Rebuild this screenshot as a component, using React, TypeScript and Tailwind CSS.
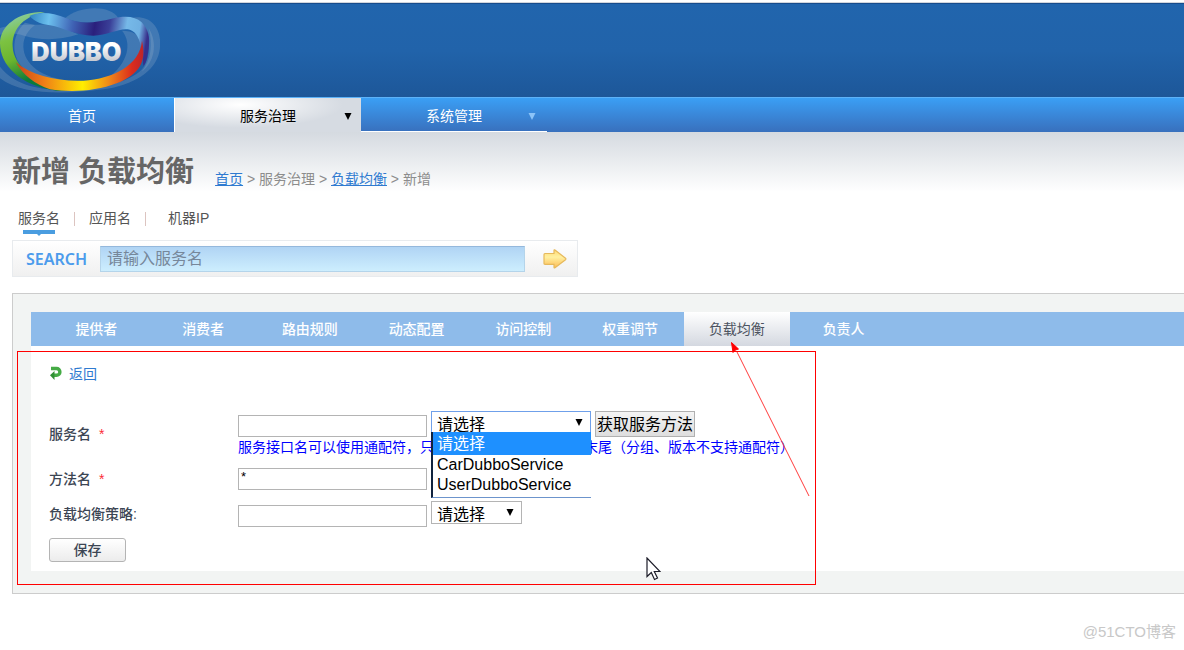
import React from "react";

const tabs = [
  "提供者",
  "消费者",
  "路由规则",
  "动态配置",
  "访问控制",
  "权重调节",
  "负载均衡",
  "负责人",
];

const services = ["请选择", "CarDubboService", "UserDubboService"];

function Logo() {
  return (
    <svg width="160" height="93" viewBox="0 12 480 279" role="img" aria-label="DUBBO">
      <defs>
        <linearGradient id="green" x1="0" y1="0" x2="0.35" y2="1">
          <stop offset="0" stopColor="#8fd0c8" />
          <stop offset="0.35" stopColor="#7cc242" />
          <stop offset="0.6" stopColor="#6cb52d" />
          <stop offset="0.9" stopColor="#0c7a3c" />
        </linearGradient>
        <linearGradient id="top" x1="90" y1="0" x2="450" y2="60" gradientUnits="userSpaceOnUse">
          <stop offset="0" stopColor="#2a7fbd" />
          <stop offset="0.18" stopColor="#6cc0ee" />
          <stop offset="0.38" stopColor="#3f63b5" />
          <stop offset="0.56" stopColor="#2a1f7c" />
          <stop offset="0.68" stopColor="#3a3f98" />
          <stop offset="0.82" stopColor="#76b9e8" />
          <stop offset="0.93" stopColor="#6fb0e2" />
          <stop offset="1" stopColor="#37308c" />
        </linearGradient>
        <linearGradient id="bottom" x1="45" y1="0" x2="435" y2="0" gradientUnits="userSpaceOnUse">
          <stop offset="0" stopColor="#c8401c" />
          <stop offset="0.22" stopColor="#ef7d17" />
          <stop offset="0.52" stopColor="#ffee00" />
          <stop offset="0.72" stopColor="#f08a18" />
          <stop offset="0.9" stopColor="#dc2c1c" />
          <stop offset="1" stopColor="#b8242c" />
        </linearGradient>
        <linearGradient id="letters" x1="0" y1="0" x2="0" y2="1">
          <stop offset="0.3" stopColor="#ffffff" />
          <stop offset="0.8" stopColor="#c4c8d0" />
        </linearGradient>
      </defs>
      <g fill="#a8bccf" fillOpacity="0.24">
        <path d="M195 55 C235 18 330 12 355 55 C310 70 250 76 195 55 Z" />
        <path d="M0 84 C50 68 110 78 150 72 C190 80 215 95 235 103 C170 125 110 118 75 108 C45 98 20 98 0 104 Z" />
        <path d="M390 54 C460 40 490 95 478 155 C466 215 400 255 310 268 C200 282 70 288 0 235 L0 200 C40 250 100 265 160 268 C290 275 400 245 432 200 C460 150 450 80 390 54 Z" />
        <path d="M446 85 C475 130 462 190 425 215 C455 180 458 130 446 85 Z" />
        <path d="M75 68 C30 110 35 175 75 208 C130 240 180 246 220 243 C120 235 72 190 70 140 C70 110 85 90 105 75 Z" />
        <path d="M366 92 C390 120 395 175 330 230 C400 205 425 165 425 130 C420 105 400 92 366 92 Z" />
      </g>
      <path
        d="M135 36 C60 32 0 75 0 130 C0 195 60 258 170 272 C195 273 205 270 205 268 C110 250 40 200 38 140 C36 95 60 52 135 36 Z"
        fill="url(#green)"
      />
      <path
        d="M88 48 C115 34 155 36 200 55 C250 76 290 66 335 56 C380 46 405 50 425 67 C445 88 451 112 446 146 C443 172 438 190 430 198 C428 150 420 105 396 92 C366 78 330 106 280 107 C225 107 190 82 150 76 C125 72 105 66 88 48 Z"
        fill="url(#top)"
      />
      <path
        d="M47 187 C95 226 170 245 250 242 C340 236 420 195 426 122 C440 185 420 222 350 250 C290 274 210 278 150 268 C105 254 70 225 47 187 Z"
        fill="url(#bottom)"
      />
      <text
        x="94"
        y="184"
        fontFamily="Inter, sans-serif"
        fontWeight="900"
        fontSize="76"
        fill="url(#letters)"
      >
        DUBBO
      </text>
    </svg>
  );
}

function Caret({ className }: { className: string }) {
  return (
    <svg className={className} width="8" height="7" viewBox="0 0 8 7" aria-hidden="true">
      <path d="M0.500 0h7L4 7z" fill="currentColor" />
    </svg>
  );
}

function Header() {
  return (
    <header>
      <div className="h-1 border-b border-[#174c8c] bg-white">
        <div className="h-[3px] border-b border-gray-300" />
      </div>
      <div className="h-[93px] bg-linear-to-b from-[#2165ad] via-[#2163aa] to-[#1d5799]">
        <Logo />
      </div>
      <nav className="flex h-[35px] border-t border-[#5db2f8] bg-linear-to-b from-[#3a9ff5] to-[#3870bd] text-sm text-white">
        <a
          href="#home"
          className="flex w-[174px] items-center justify-center pt-[2px] pr-[10px]"
        >
          首页
        </a>
        <a
          href="#governance"
          className="relative flex w-[187px] items-center justify-center border-l border-white bg-radial-[at_35%_20%] from-white to-[#d6dbe2] to-60% pt-[2px] text-black"
        >
          服务治理
          <Caret className="absolute right-[9px] text-black" />
        </a>
        <a
          href="#system"
          className="relative flex w-[186px] items-center justify-center border-b border-white pt-[3px]"
        >
          系统管理
          <Caret className="absolute right-[11px] text-[#8cc4f8]" />
        </a>
      </nav>
    </header>
  );
}

function Search() {
  return (
    <section className="mt-4">
      <div className="flex h-[34px] items-start gap-[14px] pl-[6px] text-sm leading-6 text-[#555]">
        <a href="#service" className="relative">
          服务名
          <svg className="absolute top-6 left-[5px]" width="32" height="6" viewBox="0 0 32 6" aria-hidden="true">
            <path d="M0 0h32v4H18l-2 2-2-2H0z" fill="#4a9de0" />
          </svg>
        </a>
        <span className="mt-[6px] h-[14px] w-px bg-[#dcc4c0]" />
        <a href="#app">应用名</a>
        <span className="mt-[6px] h-[14px] w-px bg-[#dcc4c0]" />
        <a href="#machine" className="pl-2">
          机器IP
        </a>
      </div>
      <form className="flex h-[37px] max-w-[566px] items-center border border-[#e8ebee] bg-linear-to-b from-white to-[#f0f0f0]">
        <label
          htmlFor="search"
          className="w-[87px] pl-[13px] font-['Noto_Sans'] text-base font-semibold text-[#4c9cec]"
        >
          SEARCH
        </label>
        <input
          id="search"
          placeholder="请输入服务名"
          className="h-[26px] min-w-0 flex-1 border border-[#b4d4ea] border-t-[#94b8dc] bg-linear-to-b from-[#b0d4f4] to-[#cdeefe] px-[6px] text-base text-gray-600 outline-none placeholder:text-[#76879a]"
        />
        <button type="button" aria-label="搜索" className="flex w-[52px] justify-center pl-2">
          <svg width="24" height="20" viewBox="0 0 24 20">
            <defs>
              <linearGradient id="go" x1="0" y1="0" x2="0" y2="1">
                <stop offset="0" stopColor="#ffd873" />
                <stop offset="0.4" stopColor="#fff0a0" />
                <stop offset="1" stopColor="#fdbb55" />
              </linearGradient>
            </defs>
            <path
              d="M1 5.500q0-1 1-1h9V1.500q0-1 1-.5l10.500 8.200q.8.800 0 1.500L12 18.800q-1 .5-1-.5v-3H2q-1 0-1-1z"
              fill="url(#go)"
              stroke="#e6b95c"
              strokeWidth="1.200"
            />
          </svg>
        </button>
      </form>
    </section>
  );
}

function ServiceSelect() {
  return (
    <div className="relative self-start">
      <select
        aria-label="选择服务"
        className="h-[23px] w-40 appearance-none border border-[#6fa0ea] bg-white pt-[3px] pl-[5px] text-base leading-5 text-black outline-none"
      >
        {services.map((s) => (
          <option key={s}>{s}</option>
        ))}
      </select>
      <Caret className="absolute top-[8px] right-[8px] text-black" />
      <ul className="absolute top-[21px] left-0 z-10 h-[66px] w-40 border-b border-l-2 border-b-[#6c94cc] border-l-[#10233f] bg-white text-base leading-5 text-black">
        {services.map((s, i) => (
          <li
            key={s}
            className={i === 0 ? "h-[23px] bg-[#1e90ff] pl-1 leading-6 text-white" : "pl-1"}
          >
            {s}
          </li>
        ))}
      </ul>
    </div>
  );
}

function BalanceForm() {
  const row = "grid grid-cols-[189px_1fr] items-center";
  const input =
    "h-[22px] w-[189px] self-end border border-[#b4b4b4] bg-white px-[2px] text-[13px] text-black outline-none";

  return (
    <form className="mt-[27px] flex flex-col gap-[11px] text-sm text-[#3c4654]">
      <div className={row}>
        <label htmlFor="service" className="font-medium">
          服务名 <span className="pl-1 text-red-500">*</span>
        </label>
        <div>
          <div className="flex h-[26px] gap-1">
            <input id="service" className={input} />
            <ServiceSelect />
            <button
              type="button"
              className="h-[26px] w-[100px] border border-[#b0b0b0] bg-linear-to-b from-[#f4f4f4] to-[#dedede] pt-[2px] text-base leading-5 whitespace-nowrap text-black"
            >
              获取服务方法
            </button>
          </div>
          <p className="flex max-w-[556px] justify-between leading-5 whitespace-nowrap text-[#0000ff]">
            <span>服务接口名可以使用通配符，只</span>
            <span>末尾（分组、版本不支持通配符）</span>
          </p>
        </div>
      </div>
      <div className={row}>
        <label htmlFor="method" className="font-medium">
          方法名 <span className="pl-1 text-red-500">*</span>
        </label>
        <input id="method" defaultValue="*" className={`${input} pb-[6px]`} />
      </div>
      <div className={row}>
        <label htmlFor="strategy" className="font-medium">
          负载均衡策略:
        </label>
        <div className="flex h-[26px] gap-1">
          <input id="strategy" className={input} />
          <div className="relative self-start">
            <select
              aria-label="选择策略"
              className="h-[23px] w-[91px] appearance-none border border-[#b4b4b4] bg-white pt-[3px] pl-[5px] text-base leading-5 text-black outline-none"
            >
              <option>请选择</option>
            </select>
            <Caret className="absolute top-[8px] right-[8px] text-black" />
          </div>
        </div>
      </div>
      <button
        type="button"
        className="h-6 w-[77px] rounded-[3px] border border-[#b4b4b4] bg-linear-to-b from-white to-[#ececec] leading-5 font-medium"
      >
        保存
      </button>
    </form>
  );
}

// red box and arrow drawn over the panel
function Annotation() {
  return (
    <div className="pointer-events-none absolute top-[57px] left-1 z-20 h-[234px] w-[799px] border border-[#ff0000]">
      <svg className="absolute -top-[10px] left-[713px]" width="82" height="158" viewBox="0 0 82 158">
        <path d="M6 10 78 154" stroke="#ff3b3b" fill="none" />
        <path d="M0.500 0.500 7.500 7 4.500 8 2 10.500z" fill="#ff0000" stroke="#ff0000" />
      </svg>
      <svg className="absolute top-[205px] left-[628px]" width="15" height="24" viewBox="0 0 15 24">
        <path
          d="M1 1v18.500l4.300-4 3.200 7 3-1.500-3.200-6.500H14z"
          fill="#fff"
          stroke="#1c1c28"
          strokeWidth="1.200"
        />
      </svg>
    </div>
  );
}

export default function App() {
  return (
    <div className="relative min-h-screen overflow-x-hidden bg-white font-['Liberation_Sans','Noto_Sans_CJK_SC',sans-serif]">
      <Header />
      <main className="bg-linear-to-b from-[#d5dae0] to-white to-[60px] pt-5 pl-3">
        <div className="flex h-[38px] items-end gap-[21px]">
          <h1 className="text-[29px] leading-9 font-bold whitespace-nowrap text-[#666]">
            新增 负载均衡
          </h1>
          <div className="text-sm leading-[22px] whitespace-nowrap text-[#8c8c8c]">
            <a href="#home" className="text-[#2f7ad0] underline">
              首页
            </a>
            {" > 服务治理 > "}
            <a href="#balance" className="text-[#2f7ad0] underline">
              负载均衡
            </a>
            {" > 新增"}
          </div>
        </div>
        <Search />
        <section className="relative mt-4 border-y border-l border-[#ccc] bg-[#f2f4f3] pt-[18px] pb-[22px] pl-[18px]">
          <nav className="bg-[#8ebbea] pl-3">
            <div className="flex h-[34px] max-w-[854px] text-sm text-white">
              {tabs.map((tab) => (
                <a
                  key={tab}
                  href="#tab"
                  className={
                    tab === "负载均衡"
                      ? "flex flex-1 items-center justify-center bg-linear-to-b from-white to-[#d4d8e0] text-[#4c5360]"
                      : "flex flex-1 items-center justify-center font-medium"
                  }
                >
                  {tab}
                </a>
              ))}
            </div>
          </nav>
          <div className="bg-white pt-[18px] pb-[9px] pl-[18px]">
            <a href="#back" className="flex w-fit items-center gap-[7px] text-sm leading-5 text-[#2f7ad0]">
              <svg width="13" height="16" viewBox="0 0 13 16" aria-hidden="true">
                <path
                  d="M2 2.500H7.500a3.300 3.300 0 0 1 0 6.800H5"
                  fill="none"
                  stroke="#45ab45"
                  strokeWidth="3.400"
                />
                <path d="M1 9.300 5.500 5v9z" fill="#2f8f33" />
              </svg>
              返回
            </a>
            <BalanceForm />
          </div>
          <Annotation />
        </section>
      </main>
      <footer className="absolute right-2 bottom-2 text-[15px] leading-5 text-[#c8c8c8]">
        @51CTO博客
      </footer>
    </div>
  );
}
